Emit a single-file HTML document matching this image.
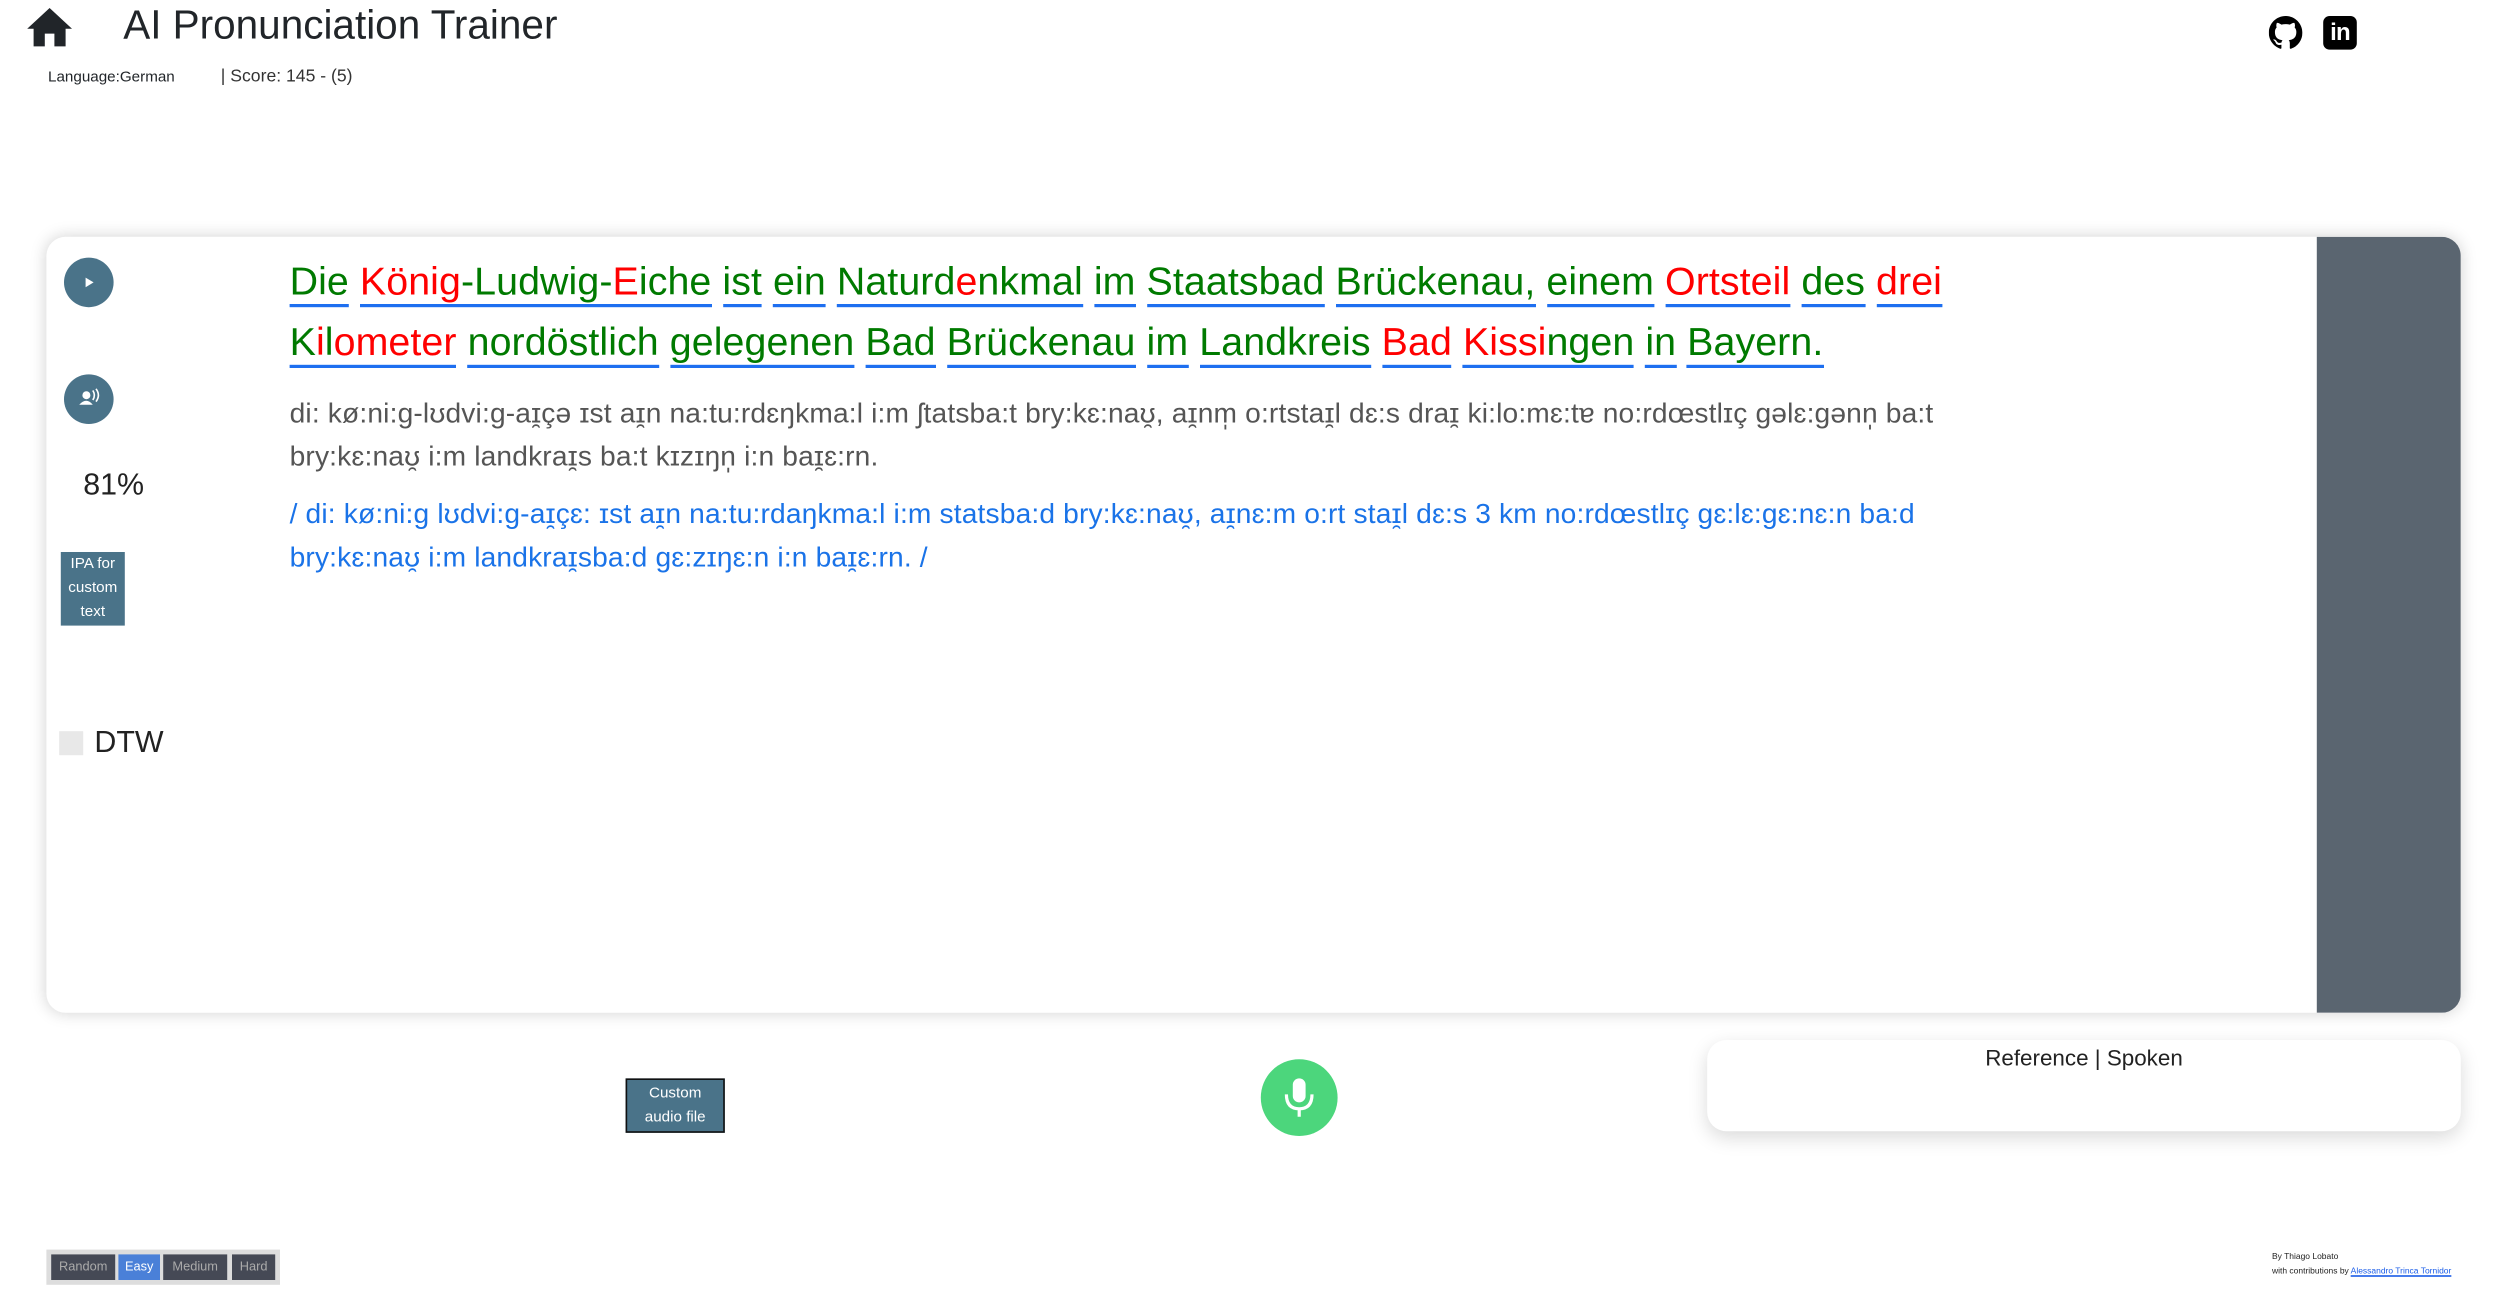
<!DOCTYPE html>
<html><head><meta charset="utf-8">
<style>
html,body{margin:0;padding:0;background:#fff;overflow:hidden;width:2506px;height:1312px}
#s{position:absolute;left:0;top:0;width:1566px;height:820px;transform:scale(1.6);transform-origin:0 0;font-family:"Liberation Sans",sans-serif;color:#212529}
.a{position:absolute;white-space:nowrap}
.card{position:absolute;left:29px;top:148px;width:1509px;height:485px;background:#fff;border-radius:12px;box-shadow:0 0 10px rgba(0,0,0,.18);overflow:hidden}
.rp{position:absolute;right:0;top:0;width:90px;height:100%;background:#5a6570}
.circ{position:absolute;width:31px;height:31px;border-radius:50%;background:#4a7389}
.t1{font-size:24.6px;letter-spacing:0.05px}
.t1 span{border-bottom:2px solid #1e6ff0;color:#007a00}
.t1 span.r{color:#f00}
.t1 span.g{color:#007a00}
.t1 span span{border:0}
.ipa{font-size:17.6px;color:#555;letter-spacing:0.1px}
.bl{font-size:17.6px;color:#1a73e8;letter-spacing:0.1px}
.btn{position:absolute;background:#4a7389;color:#fff;font-size:9.5px;text-align:center}
</style></head><body><div id="s">
<svg class="a" style="left:16px;top:4px" width="30" height="26" viewBox="0 0 30 26"><path d="M15 1 L29 14 L25 14 L25 25 L18 25 L18 17 L12 17 L12 25 L5 25 L5 14 L1 14 Z" fill="#212529"/></svg>
<div class="a" style="left:77px;top:2px;font-size:25.3px;font-weight:500">AI Pronunciation Trainer</div>
<div class="a" style="left:30px;top:43px;font-size:9.5px">Language:German</div>
<div class="a" style="left:138px;top:42px;font-size:11px;color:#333">| Score: 145 - (5)</div>
<svg class="a" style="left:1418px;top:10px" width="21" height="21" viewBox="0 0 16 16"><path fill="#000" d="M8 0C3.58 0 0 3.58 0 8c0 3.54 2.290 6.530 5.470 7.590.4.07.55-.17.55-.38 0-.19-.01-.82-.01-1.490-2.010.37-2.530-.49-2.690-.94-.09-.23-.48-.94-.82-1.130-.28-.15-.68-.52-.01-.53.63-.01 1.080.58 1.230.82.72 1.210 1.870.87 2.330.66.07-.52.28-.87.51-1.070-1.780-.2-3.640-.89-3.640-3.950 0-.87.31-1.590.82-2.150-.08-.2-.36-1.020.08-2.120 0 0 .67-.21 2.200.82.64-.18 1.320-.27 2-.27.68 0 1.360.09 2 .27 1.530-1.040 2.200-.82 2.200-.82.44 1.100.16 1.920.08 2.120.51.56.82 1.270.82 2.150 0 3.070-1.870 3.750-3.650 3.950.29.25.54.73.54 1.480 0 1.070-.01 1.930-.01 2.200 0 .21.15.46.55.38A8.013 8.013 0 0016 8c0-4.420-3.580-8-8-8z"/></svg>
<div class="a" style="left:1452px;top:10px;width:21px;height:21px;background:#000;border-radius:4px;color:#fff;font-weight:bold;font-size:15px;line-height:21px;text-align:center;letter-spacing:-0.5px">in</div>

<div class="card">
<div class="rp"></div>
<div class="circ" style="left:11px;top:13px"><svg width="31" height="31"><path d="M13.5 12.5 L18.5 15.5 L13.5 18.5Z" fill="#fff"/></svg></div>
<div class="circ" style="left:11px;top:86px"><svg width="31" height="31"><circle cx="14" cy="13" r="2.5" fill="#fff"/><path d="M9.5 19 Q14 14 18 19Z" fill="#fff"/><path d="M18 10 Q20 13 18 16 M20 9 Q23 13 20 17" stroke="#fff" fill="none" stroke-width="1"/></svg></div>
<div class="a" style="left:23px;top:145px;font-size:19px;color:#222">81%</div>
<div class="btn" style="left:9px;top:197px;width:40px;height:46px;line-height:15px">IPA for<br>custom<br>text</div>
<div class="a" style="left:8px;top:309px;width:15px;height:15px;background:#e8e8e8"></div>
<div class="a" style="left:30px;top:306px;font-size:19px;color:#222">DTW</div>

<div class="a t1" style="left:152px;top:15px"><span>Die</span> <span><span class="r">König</span>-Ludwig-<span class="r">E</span>iche</span> <span>ist</span> <span>ein</span> <span>Naturd<span class="r">e</span>nkmal</span> <span>im</span> <span>Staatsbad</span> <span>Brückenau,</span> <span>einem</span> <span class="r">Ortsteil</span> <span>des</span> <span class="r">drei</span></div>
<div class="a t1" style="left:152px;top:53px"><span>K<span class="r">i</span>l<span class="r">o</span><span class="r">meter</span></span> <span>nordöstlich</span> <span>gelegenen</span> <span>Bad</span> <span>Brückenau</span> <span>im</span> <span>Landkreis</span> <span class="r">Bad</span> <span><span class="r">Kissi</span>ngen</span> <span>in</span> <span>Bayern.</span></div>
<div class="a ipa" style="left:152px;top:97px;line-height:27px">di: kø:ni:g-lʊdvi:g-aɪ̯çə ɪst aɪ̯n na:tu:rdɛŋkma:l i:m ʃtatsba:t bry:kɛ:naʊ̯, aɪ̯nm̩ o:rtstaɪ̯l dɛ:s draɪ̯ ki:lo:mɛ:tɐ no:rdœstlɪç gəlɛ:gənn̩ ba:t<br>bry:kɛ:naʊ̯ i:m landkraɪ̯s ba:t kɪzɪŋn̩ i:n baɪ̯ɛ:rn.</div>
<div class="a bl" style="left:152px;top:160px;line-height:27px">/ di: kø:ni:g lʊdvi:g-aɪ̯çɛ: ɪst aɪ̯n na:tu:rdaŋkma:l i:m statsba:d bry:kɛ:naʊ̯, aɪ̯nɛ:m o:rt staɪ̯l dɛ:s 3 km no:rdœstlɪç gɛ:lɛ:gɛ:nɛ:n ba:d<br>bry:kɛ:naʊ̯ i:m landkraɪ̯sba:d gɛ:zɪŋɛ:n i:n baɪ̯ɛ:rn. /</div>
</div>

<div class="btn" style="left:391px;top:674px;width:60px;height:31px;border:1px solid #111;line-height:15px;padding-top:1px">Custom<br>audio file</div>
<div class="a" style="left:788px;top:662px;width:48px;height:48px;border-radius:50%;background:#4cd67c"><svg width="48" height="48"><rect x="20" y="12" width="8" height="15" rx="4" fill="#fff"/><path d="M16 22 Q16 31 24 31 Q32 31 32 22" stroke="#fff" stroke-width="2" fill="none"/><path d="M24 31 V36" stroke="#fff" stroke-width="2"/></svg></div>
<div class="a" style="left:1067px;top:650px;width:471px;height:57px;background:#fff;border-radius:12px;box-shadow:0 4px 12px rgba(0,0,0,.15)"><div style="text-align:center;font-size:14px;margin-top:3px;color:#222">Reference | Spoken</div></div>

<div class="a" style="left:29px;top:781px;width:146px;height:22px;background:#ddd"></div>
<div class="a" style="left:32px;top:784px;width:40px;height:16px;background:#454955;color:#aaa;font-size:8px;line-height:16px;text-align:center">Random</div>
<div class="a" style="left:74px;top:784px;width:26px;height:16px;background:#4a80d8;color:#fff;font-size:8px;line-height:16px;text-align:center">Easy</div>
<div class="a" style="left:102px;top:784px;width:40px;height:16px;background:#454955;color:#aaa;font-size:8px;line-height:16px;text-align:center">Medium</div>
<div class="a" style="left:145px;top:784px;width:27px;height:16px;background:#454955;color:#aaa;font-size:8px;line-height:16px;text-align:center">Hard</div>

<div class="a" style="left:1420px;top:782px;font-size:5.3px;line-height:9px;color:#222">By Thiago Lobato<br>with contributions by <span style="color:#1a5ce8;text-decoration:underline">Alessandro Trinca Tornidor</span></div>
</div></body></html>
